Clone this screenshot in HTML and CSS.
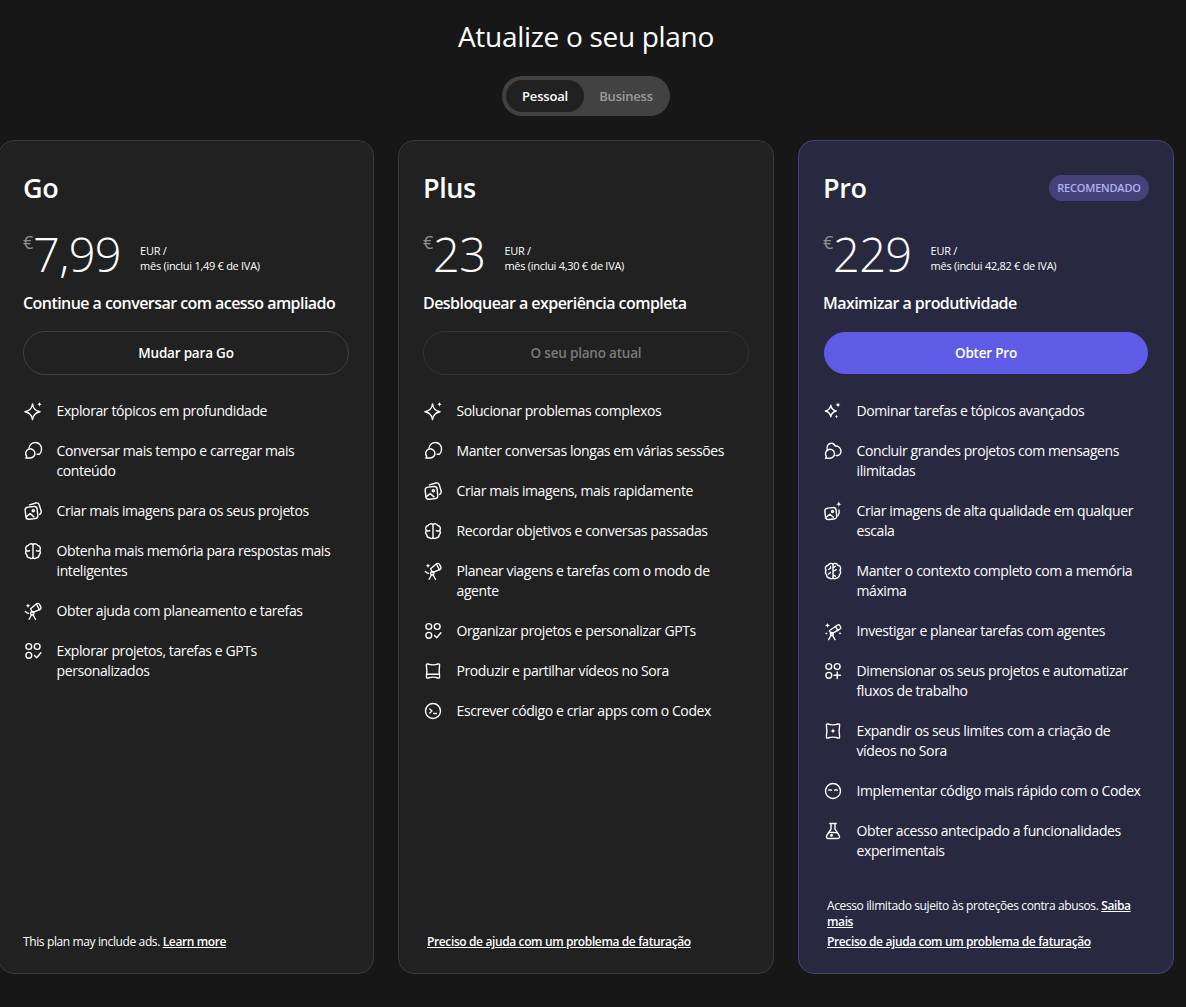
FILE: index.html
```html
<!DOCTYPE html>
<html lang="pt">
<head>
  <meta charset="UTF-8">
  <title>Atualize o seu plano</title>
  <link rel="stylesheet" href="styles.css">
</head>
<body>
  <svg class="sprite" width="0" height="0">
    <symbol id="i-sparkle" viewBox="0 0 20 20">
      <path d="M9.500 3C10 7.300 12 9.700 17 10.800 12 11.900 10 14.300 9.500 18.600 9 14.300 7 11.900 2 10.800 7 9.700 9 7.300 9.500 3Z"/>
      <path class="fill" d="M16.500 .8c.2 1.600.9 2.300 2.500 2.500-1.600.2-2.300.9-2.500 2.500-.2-1.600-.9-2.300-2.500-2.500 1.600-.2 2.300-.9 2.500-2.500Z"/>
    </symbol>
    <symbol id="i-chat" viewBox="0 0 20 20">
      <path d="M7.200 17H2.800l.9-1.700A4.600 4.600 0 1 1 7.200 17Z"/>
      <path d="M6 7A6 6 0 0 1 18.500 8.500c0 1.900-.7 3.500-2 4.700h-2.400"/>
    </symbol>
    <symbol id="i-image" viewBox="0 0 20 20">
      <rect x="2.500" y="5.800" width="12" height="12.200" rx="3" transform="rotate(-6 8.500 12)"/>
      <path d="M6.500 3.800 12.800 2c1.600-.4 3 .3 3.400 1.800l1.900 6c.4 1.500-.1 2.800-1.400 3.600"/>
      <path d="M3.600 15.400 7.200 12.600l3.800 3.300"/>
      <circle cx="10.300" cy="9.700" r="1.100"/>
    </symbol>
    <symbol id="i-brain" viewBox="0 0 20 20">
      <path d="M10 3.600A3 3 0 0 0 5.200 4.500 3 3 0 0 0 3.400 9.500 3 3 0 0 0 3.800 13.700 3 3 0 0 0 6.600 16.700 2.500 2.500 0 0 0 10 16.800 2.500 2.500 0 0 0 13.400 16.700 3 3 0 0 0 16.200 13.700 3 3 0 0 0 16.600 9.500 3 3 0 0 0 14.800 4.500 3 3 0 0 0 10 3.600Z"/>
      <path d="M10 3.600v13.200M3.500 9.600c1 .7 2.100.7 3.100 0M16.500 9.600c-1 .7-2.100.7-3.100 0"/>
    </symbol>
    <symbol id="i-telescope" viewBox="0 0 20 20">
      <path d="M7.600 7.800 13.500 2.800c1-.7 2.300-.5 3 .7l1.200 2.200c.6 1.200.1 2.400-1.100 2.900L9.500 11.500Z"/>
      <path d="M13.400 3l3 5.800"/>
      <circle cx="9.300" cy="12.300" r="1.700"/>
      <path d="M8.500 13.800 6.200 18.300M10.100 13.800l2.300 4.500"/>
      <path class="fill" d="M5 2.300c.2 1.600.9 2.300 2.500 2.500-1.600.2-2.300.9-2.500 2.500-.2-1.600-.9-2.300-2.500-2.500 1.600-.2 2.300-.9 2.500-2.500Z"/>
      <path d="M2.300 10.500c.9.900 2 1.500 3.200 1.900"/>
    </symbol>
    <symbol id="i-dots" viewBox="0 0 20 20">
      <circle cx="5.800" cy="5.500" r="2.900"/>
      <circle cx="14.200" cy="5.500" r="2.900"/>
      <circle cx="5.800" cy="14.300" r="2.900"/>
      <path d="M11.500 14.500l2.200 2.300 4.200-5"/>
    </symbol>
    <symbol id="i-sora" viewBox="0 0 20 20">
      <path d="M5 3C7.500 4 12.500 4 15 3c1-.3 1.800.3 1.600 1.300-.6 3.500-.6 7.900 0 11.400.2 1-.6 1.600-1.600 1.300-2.500-1-7.500-1-10 0-1 .3-1.800-.3-1.600-1.300.6-3.500.6-7.900 0-11.400C3.200 3.300 4 2.700 5 3Z"/>
      <path d="M3.500 13.300h13"/>
    </symbol>
    <symbol id="i-codex" viewBox="0 0 20 20">
      <circle cx="10" cy="10" r="7.500"/>
      <path d="M6.800 8l2.100 2-2.100 2M10.800 12.500h2.700"/>
    </symbol>
    <symbol id="i-pro-sparkle" viewBox="0 0 20 20">
      <path d="M7.800 4.300C8.300 7.500 9.800 9.200 13.300 10 9.800 10.800 8.300 12.500 7.800 15.700 7.300 12.500 5.800 10.800 2.300 10 5.800 9.200 7.300 7.500 7.800 4.300Z"/>
      <path class="fill" d="M15 1.300c.2 1.700.9 2.400 2.600 2.600-1.700.2-2.400.9-2.600 2.600-.2-1.700-.9-2.400-2.600-2.600 1.700-.2 2.400-.9 2.600-2.600ZM13.500 13.500c.2 1.400.7 1.900 2.100 2.100-1.400.2-1.900.7-2.100 2.100-.2-1.400-.7-1.900-2.100-2.100 1.400-.2 1.900-.7 2.100-2.100Z"/>
    </symbol>
    <symbol id="i-pro-chat" viewBox="0 0 20 20">
      <path d="M7.300 17.300H2.600l.8-1.800A4.500 4.500 0 1 1 7.300 17.300Z"/>
      <path d="M4.200 9C3.200 5.300 5.300 2.300 8.200 2.300c1.800 0 3.200 1 3.900 2.700A5.200 5.200 0 0 1 18 10c0 2.200-1.300 3.900-3.200 4.500h-1.700"/>
    </symbol>
    <symbol id="i-pro-image" viewBox="0 0 20 20">
      <rect x="2.200" y="6.800" width="11.300" height="11.500" rx="3" transform="rotate(-6 8 13)"/>
      <path d="M3.500 16 6.800 13.300l3.600 3"/>
      <circle cx="9.500" cy="10.500" r="1"/>
      <path d="M16 9c.6 2.200.2 4.100-1.100 5.700"/>
      <path class="fill" d="M15.800.3c.2 1.900 1 2.700 2.900 2.900-1.900.2-2.700 1-2.900 2.900-.2-1.900-1-2.700-2.900-2.900 1.900-.2 2.700-1 2.900-2.900Z"/>
    </symbol>
    <symbol id="i-pro-brain" viewBox="0 0 20 20">
      <path d="M10 3.200A3 3 0 0 0 5.200 4.200 3 3 0 0 0 3.200 9.300 3 3 0 0 0 3.600 13.700 3 3 0 0 0 6.600 17 2.500 2.500 0 0 0 10 17 2.500 2.500 0 0 0 13.400 17 3 3 0 0 0 16.400 13.700 3 3 0 0 0 16.800 9.300 3 3 0 0 0 14.800 4.200 3 3 0 0 0 10 3.200Z"/>
      <path d="M10 3.200V17M10 7l2.400-1.800M10 10.500l3.300-1.800M10 13.800l2.400 1.400M7.500 5.500v1.800L5.500 8.500M7.500 11.500 5.500 13"/>
    </symbol>
    <symbol id="i-pro-telescope" viewBox="0 0 20 20">
      <path d="M6.300 9.800 14.500 4c.9-.6 1.900-.3 2.300.5l.8 1.500c.4.900.1 1.800-.8 2.200L8.500 12.800Z"/>
      <circle cx="8.800" cy="13" r="1.500"/>
      <path d="M8 14.400 5.600 18.700M9.600 14.400l2.400 4.300"/>
      <path d="M12.500 5.400l2.300 4.300"/>
      <path class="fill" d="M4.500 1.800c.2 1.700.9 2.400 2.600 2.600-1.700.2-2.400.9-2.600 2.600-.2-1.700-.9-2.400-2.600-2.600 1.700-.2 2.400-.9 2.600-2.600ZM3.300 10.800c.1 1.200.6 1.700 1.800 1.800-1.200.1-1.700.6-1.800 1.800-.1-1.200-.6-1.700-1.800-1.800 1.200-.1 1.700-.6 1.800-1.800ZM17 10.500c.1 1.200.6 1.700 1.800 1.800-1.200.1-1.700.6-1.800 1.800-.1-1.200-.6-1.700-1.800-1.800 1.200-.1 1.700-.6 1.800-1.800Z"/>
    </symbol>
    <symbol id="i-pro-dots" viewBox="0 0 20 20">
      <circle cx="5.800" cy="5.500" r="2.900"/>
      <circle cx="14.200" cy="5.500" r="2.900"/>
      <circle cx="5.800" cy="14.300" r="2.900"/>
      <path d="M14.200 11v6.600M10.900 14.300h6.600"/>
    </symbol>
    <symbol id="i-pro-sora" viewBox="0 0 20 20">
      <path d="M5 3C7.500 4 12.500 4 15 3c1-.3 1.800.3 1.600 1.300-.6 3.500-.6 7.900 0 11.400.2 1-.6 1.600-1.600 1.300-2.500-1-7.500-1-10 0-1 .3-1.800-.3-1.600-1.300.6-3.500.6-7.900 0-11.400C3.200 3.300 4 2.700 5 3Z"/>
      <path class="fill" d="M10 7c.2 1.900 1 2.700 2.900 2.900-1.900.2-2.700 1-2.900 2.900-.2-1.900-1-2.700-2.900-2.900C9 9.700 9.800 8.900 10 7Z"/>
    </symbol>
    <symbol id="i-pro-codex" viewBox="0 0 20 20">
      <circle cx="10" cy="10" r="7.500"/>
      <path d="M5.800 9.300c.7-.9 1.800-.9 2.500 0M11.700 9.300c.7-.9 1.800-.9 2.500 0"/>
    </symbol>
    <symbol id="i-flask" viewBox="0 0 20 20">
      <path d="M6.800 2.500h6.400M8 2.500v5.600L3.800 14.500c-.9 1.500 0 3 1.700 3h9c1.700 0 2.600-1.500 1.700-3L12 8.100V2.500"/>
      <path d="M5.800 11.500c2.800-.6 5.600.6 8.400 0"/>
      <circle cx="8.500" cy="14.300" r=".8"/>
    </symbol>
  </svg>

  <h1 class="title">Atualize o seu plano</h1>
  <div class="toggle">
    <span class="toggle-on">Pessoal</span>
    <span class="toggle-off">Business</span>
  </div>

  <div class="plans">
    <section class="card">
      <div class="card-head"><h2>Go</h2></div>
      <div class="price">
        <span class="cur">€</span><span class="amount">7,99</span>
        <span class="per">EUR /<br>mês (inclui 1,49 € de IVA)</span>
      </div>
      <p class="tagline">Continue a conversar com acesso ampliado</p>
      <button class="btn">Mudar para Go</button>
      <ul class="features">
        <li><svg><use href="#i-sparkle"/></svg><span>Explorar tópicos em profundidade</span></li>
        <li><svg><use href="#i-chat"/></svg><span>Conversar mais tempo e carregar mais conteúdo</span></li>
        <li><svg><use href="#i-image"/></svg><span>Criar mais imagens para os seus projetos</span></li>
        <li><svg><use href="#i-brain"/></svg><span>Obtenha mais memória para respostas mais inteligentes</span></li>
        <li><svg><use href="#i-telescope"/></svg><span>Obter ajuda com planeamento e tarefas</span></li>
        <li><svg><use href="#i-dots"/></svg><span>Explorar projetos, tarefas e GPTs personalizados</span></li>
      </ul>
      <div class="foot">
        <p>This plan may include ads. <a href="#">Learn more</a></p>
      </div>
    </section>

    <section class="card">
      <div class="card-head"><h2>Plus</h2></div>
      <div class="price">
        <span class="cur">€</span><span class="amount">23</span>
        <span class="per">EUR /<br>mês (inclui 4,30 € de IVA)</span>
      </div>
      <p class="tagline">Desbloquear a experiência completa</p>
      <button class="btn btn-current">O seu plano atual</button>
      <ul class="features">
        <li><svg><use href="#i-sparkle"/></svg><span>Solucionar problemas complexos</span></li>
        <li><svg><use href="#i-chat"/></svg><span>Manter conversas longas em várias sessões</span></li>
        <li><svg><use href="#i-image"/></svg><span>Criar mais imagens, mais rapidamente</span></li>
        <li><svg><use href="#i-brain"/></svg><span>Recordar objetivos e conversas passadas</span></li>
        <li><svg><use href="#i-telescope"/></svg><span>Planear viagens e tarefas com o modo de agente</span></li>
        <li><svg><use href="#i-dots"/></svg><span>Organizar projetos e personalizar GPTs</span></li>
        <li><svg><use href="#i-sora"/></svg><span>Produzir e partilhar vídeos no Sora</span></li>
        <li><svg><use href="#i-codex"/></svg><span>Escrever código e criar apps com o Codex</span></li>
      </ul>
      <div class="foot foot-inset">
        <p><a href="#">Preciso de ajuda com um problema de faturação</a></p>
      </div>
    </section>

    <section class="card card-pro">
      <div class="card-head"><h2>Pro</h2><span class="badge">RECOMENDADO</span></div>
      <div class="price">
        <span class="cur">€</span><span class="amount">229</span>
        <span class="per">EUR /<br>mês (inclui 42,82 € de IVA)</span>
      </div>
      <p class="tagline">Maximizar a produtividade</p>
      <button class="btn btn-pro">Obter Pro</button>
      <ul class="features">
        <li><svg><use href="#i-pro-sparkle"/></svg><span>Dominar tarefas e tópicos avançados</span></li>
        <li><svg><use href="#i-pro-chat"/></svg><span>Concluir grandes projetos com mensagens ilimitadas</span></li>
        <li><svg><use href="#i-pro-image"/></svg><span>Criar imagens de alta qualidade em qualquer escala</span></li>
        <li><svg><use href="#i-pro-brain"/></svg><span>Manter o contexto completo com a memória máxima</span></li>
        <li><svg><use href="#i-pro-telescope"/></svg><span>Investigar e planear tarefas com agentes</span></li>
        <li><svg><use href="#i-pro-dots"/></svg><span>Dimensionar os seus projetos e automatizar fluxos de trabalho</span></li>
        <li><svg><use href="#i-pro-sora"/></svg><span>Expandir os seus limites com a criação de vídeos no Sora</span></li>
        <li><svg><use href="#i-pro-codex"/></svg><span>Implementar código mais rápido com o Codex</span></li>
        <li><svg><use href="#i-flask"/></svg><span>Obter acesso antecipado a funcionalidades experimentais</span></li>
      </ul>
      <div class="foot foot-inset">
        <p>Acesso ilimitado sujeito às proteções contra abusos. <a href="#">Saiba</a> <a href="#">mais</a></p>
        <p class="foot-link"><a href="#">Preciso de ajuda com um problema de faturação</a></p>
      </div>
    </section>
  </div>
</body>
</html>
```

FILE: styles.css
```css
* {
  box-sizing: border-box;
}
html, body {
  height: 1007px;
  overflow: hidden;
}
body {
  margin: 0;
  padding-right: 14px;
  background: #171717;
  color: #fff;
  font-family: "Open Sans", "Noto Sans", sans-serif;
  font-size: 14px;
  letter-spacing: -0.4px;
  display: flex;
  flex-direction: column;
  align-items: center;
}
.sprite {
  position: absolute;
}
.sprite symbol {
  fill: none;
  stroke: #fff;
  stroke-width: 1.4;
  stroke-linecap: round;
  stroke-linejoin: round;
}
.sprite .fill {
  fill: #fff;
  stroke: none;
}
.title {
  margin: 16px 0 0;
  font-size: 28px;
  line-height: 40px;
  font-weight: 400;
  letter-spacing: -0.3px;
}
.toggle {
  margin-top: 20px;
  width: 168px;
  height: 40px;
  padding: 4px;
  border-radius: 20px;
  background: #424242;
  display: flex;
  align-items: center;
  font-size: 13px;
  font-weight: 600;
  letter-spacing: -0.2px;
}
.toggle span {
  height: 32px;
  line-height: 32px;
  text-align: center;
  border-radius: 16px;
}
.toggle-on {
  width: 78px;
  background: #212121;
}
.toggle-off {
  width: 78px;
  padding-left: 6px;
  color: #9b9b9b;
}
.plans {
  margin-top: 24px;
  align-self: flex-start;
  margin-left: -2px;
  display: flex;
  gap: 24px;
}
.card {
  width: 376px;
  height: 834px;
  padding: 23px 24px 23px;
  border: 1px solid #3a3a3a;
  border-radius: 16px;
  background: #212121;
  display: flex;
  flex-direction: column;
}
.card-pro {
  background: #292841;
  border-color: #45427a;
}
.card-head {
  height: 48px;
  display: flex;
  align-items: center;
  justify-content: space-between;
}
.card-head h2 {
  margin: 0;
  font-size: 27px;
  line-height: 48px;
  font-weight: 600;
}
.badge {
  margin: 0 0 1px;
  width: 100px;
  height: 26px;
  border-radius: 13px;
  background: #45427a;
  color: #b1b0f5;
  font-size: 11px;
  font-weight: 600;
  letter-spacing: -0.2px;
  line-height: 26px;
  text-align: center;
}
.price {
  margin-top: 11px;
  height: 62px;
  display: flex;
  align-items: flex-start;
}
.cur {
  font-size: 18px;
  line-height: 24px;
  margin-top: 7px;
  color: #8e8e8e;
}
.amount {
  font-size: 47px;
  line-height: 62px;
  font-weight: 350;
  letter-spacing: -0.6px;
}
.per {
  margin: 20px 0 0 19px;
  font-size: 11px;
  letter-spacing: -0.28px;
  line-height: 15px;
}
.tagline {
  margin: 6px 0 0;
  font-size: 16px;
  letter-spacing: -0.55px;
  line-height: 24px;
  font-weight: 600;
}
.btn {
  margin-top: 16px;
  width: 100%;
  height: 44px;
  border-radius: 22px;
  border: 1px solid #3f3f3f;
  background: transparent;
  color: #fff;
  font: inherit;
  font-size: 13.5px;
  font-weight: 600;
  letter-spacing: -0.2px;
}
.btn-current {
  color: #7a7a7a;
  border-color: #333;
}
.btn-pro {
  margin: 17px 0 1px 1px;
  width: 324px;
  height: 42px;
  border-color: #5e5ce6;
  background: #5e5ce6;
}
.features {
  margin: 26px 0 0;
  padding: 0;
  list-style: none;
  display: flex;
  flex-direction: column;
  gap: 20px;
}
.features li {
  display: flex;
  gap: 13.5px;
  line-height: 20px;
}
.features svg {
  flex: none;
  width: 20px;
  height: 20px;
}
.foot {
  margin-top: auto;
  font-size: 12px;
  letter-spacing: -0.38px;
  line-height: 16px;
}
.foot p {
  margin: 0;
}
.foot a {
  color: #fff;
  font-weight: 600;
}
.foot-inset {
  padding: 0 4px;
}
.foot .foot-link {
  margin-top: 4px;
}
```
